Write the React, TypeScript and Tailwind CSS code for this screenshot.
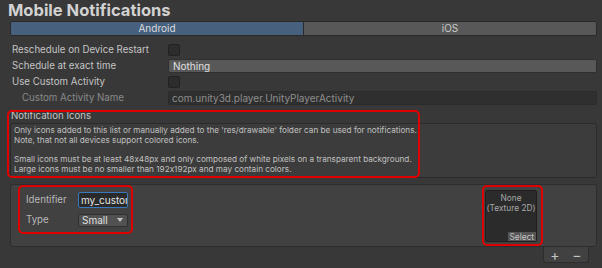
export default function App() {
  return (
    <div className="relative h-[268px] w-[602px] overflow-hidden bg-[#383838] pl-[10px] pr-[5px] font-['Inter',sans-serif] text-[#c4c4c4] [font-feature-settings:'calt'_0]">
      <div className="-ml-[2px] flex h-[20px] items-center text-[16.5px] font-bold leading-none text-[#d2d2d2]">
        Mobile Notifications
      </div>

      <div className="mt-[1px] flex h-[15px] text-[10px]">
        <div className="flex flex-1 items-center justify-center rounded-l-[2px] border border-[#2a2a2a] bg-[#46607e] text-[#dcdcdc]">
          Android
        </div>
        <div className="-ml-px flex flex-1 items-center justify-center rounded-r-[2px] border border-[#2a2a2a] bg-[#585858] text-[#c8c8c8]">
          iOS
        </div>
      </div>

      <div className="mt-[6px] text-[9.7px]">
        <Row label="Reschedule on Device Restart">
          <Checkbox />
        </Row>
        <Row label="Schedule at exact time">
          <div className="flex h-[14px] flex-1 items-center rounded-[2px] border border-[#303030] bg-[#585858] px-[4px] text-[10px] text-[#e0e0e0]">
            Nothing
          </div>
        </Row>
        <Row label="Use Custom Activity">
          <Checkbox />
        </Row>
        <Row label="Custom Activity Name" dim indent>
          <div className="flex h-[14px] flex-1 items-center rounded-[2px] border border-[#2b2b2b] bg-[#2f2f2f] px-[3px] text-[10px] text-[#8e8e8e]">
            com.unity3d.player.UnityPlayerActivity
          </div>
        </Row>
      </div>

      <div className="mt-[3px] flex h-[14px] items-center pl-[1px] text-[9.7px]">
        Notification Icons
      </div>
      <div className="flex h-[55px] flex-col justify-center rounded-[3px] border border-[#2b2b2b] bg-[#3c3c3c] px-[3px] text-[8.2px] leading-[9.8px] text-[#c0c0c0]">
        <p>
          Only icons added to this list or manually added to the 'res/drawable' folder can be used for notifications.
        </p>
        <p>Note, that not all devices support colored icons.</p>
        <p>&nbsp;</p>
        <p>
          Small icons must be at least 48x48px and only composed of white pixels on a transparent background.
        </p>
        <p>Large icons must be no smaller than 192x192px and may contain colors.</p>
      </div>

      <div className="mt-[6px] flex h-[63px] rounded-[3px] border border-[#2d2d2d] bg-[#414141] text-[9.7px]">
        <div className="ml-[15px] mt-[7px] flex w-[104px] flex-col gap-[5px]">
          <div className="flex items-center">
            <span className="w-[52px] text-[#b8b8b8]">Identifier</span>
            <div className="flex h-[16px] w-[50px] items-center overflow-hidden whitespace-nowrap rounded-[2px] border border-[#3a79bb] bg-[#2a2a2a] pl-[2px] text-[10px] text-[#e6e6e6]">
              my_custom
            </div>
          </div>
          <div className="flex items-center">
            <span className="w-[52px] text-[#b8b8b8]">Type</span>
            <div className="flex h-[13px] w-[50px] items-center justify-between rounded-[2px] border border-[#303030] bg-[#515151] pl-[3px] pr-[4px] text-[10px] text-[#e0e0e0]">
              Small
              <span className="h-0 w-0 border-x-[3px] border-t-[4px] border-x-transparent border-t-[#c4c4c4]" />
            </div>
          </div>
        </div>
        <div className="ml-auto mr-[59px] mt-[5px] flex h-[52px] w-[52px] flex-col whitespace-nowrap rounded-[2px] border border-[#1f1f1f] bg-[#2b2b2b] text-[8.3px] leading-[10px] text-[#a8a8a8]">
          <div className="mt-[2px] text-center">None</div>
          <div className="text-center">(Texture 2D)</div>
          <div className="ml-auto mt-auto flex h-[9px] items-center bg-[#555555] px-[2px] text-[#c4c4c4]">
            Select
          </div>
        </div>
      </div>

      <div className="ml-auto mr-[8px] flex h-[16px] w-[46px] items-center justify-around rounded-b-[3px] border border-t-0 border-[#2d2d2d] bg-[#414141] text-[14px] leading-none text-[#c4c4c4]">
        <span>+</span>
        <span>−</span>
      </div>

      <div className="pointer-events-none absolute left-[7px] top-[110px] h-[68px] w-[413px] rounded-[5px] border-2 border-[#e00000]" />
      <div className="pointer-events-none absolute left-[18px] top-[185px] h-[49px] w-[115px] rounded-[5px] border-2 border-[#e00000]" />
      <div className="pointer-events-none absolute left-[482px] top-[185px] h-[61px] w-[61px] rounded-[5px] border-2 border-[#e00000]" />
    </div>
  );
}

function Row({
  label,
  children,
  dim,
  indent,
}: {
  label: string;
  children: React.ReactNode;
  dim?: boolean;
  indent?: boolean;
}) {
  return (
    <div className="flex h-[16px] items-center">
      <span
        className={`w-[158px] shrink-0 ${indent ? "pl-[12px]" : "pl-[2px]"} ${dim ? "text-[#8a8a8a]" : ""}`}
      >
        {label}
      </span>
      {children}
    </div>
  );
}

const Checkbox = () => (
  <div className="h-[12px] w-[12px] rounded-[2px] border border-[#222222] bg-[#2c2c2c]" />
);
